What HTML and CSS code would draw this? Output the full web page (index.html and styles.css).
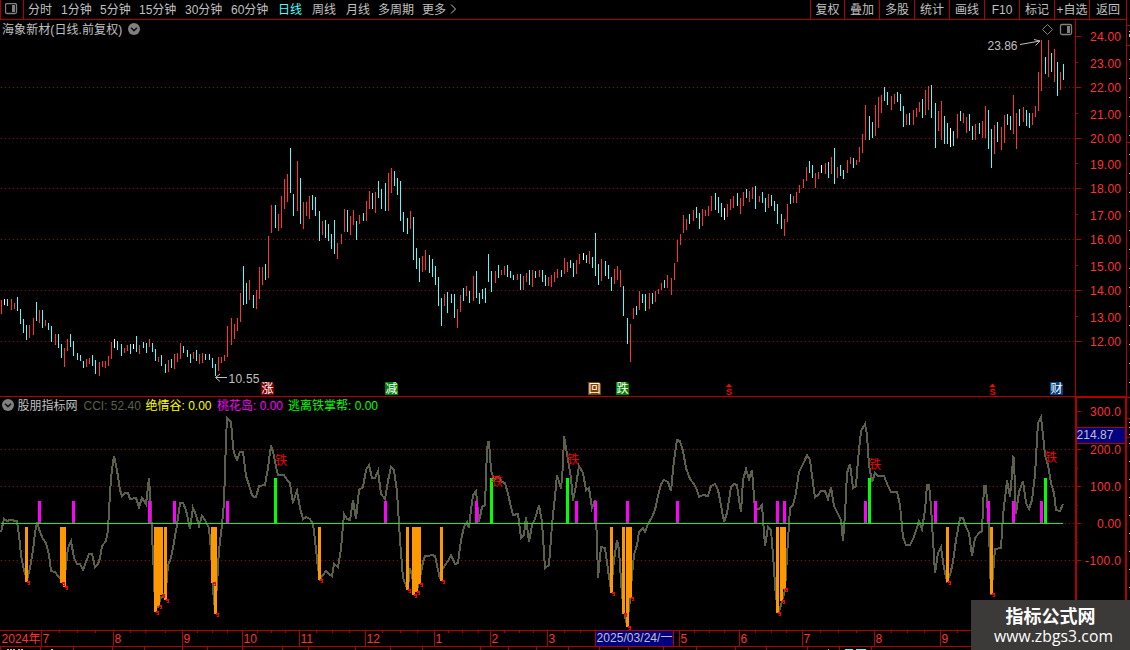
FILE: index.html
```html
<!DOCTYPE html>
<html lang="zh-CN">
<head>
<meta charset="utf-8">
<title>海象新材 日线</title>
<link rel="stylesheet" href="styles.css">
</head>
<body>
<div class="app">
  <header class="toolbar">
    <div class="layout-toggle">
      <svg width="13" height="12" viewBox="0 0 13 12"><rect x=".5" y=".5" width="11" height="10" rx="1.5" class="icon-line"/><rect x="7" y="2" width="3" height="7" class="icon-fill"/></svg>
    </div>
    <nav class="periods">
      <span>分时</span><span>1分钟</span><span>5分钟</span><span>15分钟</span><span>30分钟</span><span>60分钟</span><span class="active">日线</span><span>周线</span><span>月线</span><span>多周期</span><span>更多</span>
      <svg width="8" height="12" viewBox="0 0 8 12"><path d="M1 1.5 5.5 6 1 10.5" class="chevron"/></svg>
    </nav>
    <nav class="tools">
      <span>复权</span><span>叠加</span><span>多股</span><span>统计</span><span>画线</span><span>F10</span><span>标记</span><span>+自选</span><span>返回</span>
    </nav>
  </header>

  <section class="pane price">
    <svg id="price" class="plot" width="1130" height="376" viewBox="0 20 1130 376"></svg>
    <div class="caption">
      <span>海象新材(日线.前复权)</span>
      <svg class="drop" width="12" height="12" viewBox="0 0 12 12"><circle cx="6" cy="6" r="6"/><path d="M3 4.7 6 7.6 9 4.7"/></svg>
    </div>
    <span class="badge rise">涨</span>
    <span class="badge cut">减</span>
    <span class="badge buyback">回</span>
    <span class="badge fall">跌</span>
    <span class="badge finance">财</span>
  </section>

  <section class="pane indicator">
    <svg id="cci" class="plot" width="1130" height="234" viewBox="0 396 1130 234"></svg>
    <div class="legend">
      <svg class="drop" width="12" height="12" viewBox="0 0 12 12"><circle cx="6" cy="6" r="6"/><path d="M3 4.7 6 7.6 9 4.7"/></svg>
      <span class="name">股朋指标网</span>
      <span class="cci">CCI: 52.40</span>
      <span class="yellow">绝情谷: 0.00</span>
      <span class="magenta">桃花岛: 0.00</span>
      <span class="green">逃离铁掌帮: 0.00</span>
    </div>
  </section>

  <footer class="timeline">
    <svg id="time" class="plot" width="1130" height="20" viewBox="0 630 1130 20"></svg>
  </footer>

  <aside class="watermark">
    <strong>指标公式网</strong>
    <span>www.zbgs3.com</span>
  </aside>
</div>
<script src="chart.js"></script>
</body>
</html>
```
FILE: styles.css
```css
* { box-sizing: border-box; }
body {
  margin: 0;
  background: #000;
  color: #c0c0c0;
  font: 12px/16px "Liberation Sans", "Noto Sans CJK SC", sans-serif;
}
.app { position: relative; width: 1130px; height: 650px; overflow: hidden; display: flex; flex-direction: column; }
.toolbar { width: 1127px; height: 20px; flex: none; display: flex; border-bottom: 1px solid #b00000; border-right: 1px solid #b00000; white-space: nowrap; }
.layout-toggle { width: 24px; padding: 3px 0 0 4px; border-left: 1px solid #b00000; border-right: 1px solid #b00000; }
.layout-toggle svg { display: block; }
.periods { display: grid; grid-template-columns: 33px 39px 39px 46px 46px 47px 34px 34px 32px 44px 28px 12px; padding-left: 4px; line-height: 20px; }
.periods svg { margin-top: 3px; }
.periods .active { color: #54fcfc; }
.tools { margin-left: auto; display: grid; grid-template-columns: 34px repeat(7, 35px) 37px; line-height: 20px; }
.tools span { border-left: 1px solid #b00000; text-align: center; height: 19px; }
.icon-line { fill: none; stroke: #808080; stroke-width: 1.3; }
.icon-fill { fill: #808080; }
.chevron { fill: none; stroke: #c0c0c0; }

.pane { position: relative; flex: none; }
.plot { display: block; }
.price { height: 376px; }
.indicator { height: 234px; }
.timeline { height: 20px; flex: none; }
.caption { position: absolute; left: 2px; top: 2px; display: flex; align-items: center; gap: 6px; letter-spacing: .08px; white-space: nowrap; }
.caption .drop { margin-top: -2px; }
.legend { position: absolute; left: 2px; top: 2px; display: flex; align-items: center; white-space: nowrap; }
.legend .drop { margin-top: -2px; }
.legend .name { width: 66px; margin-left: 3.5px; }
.legend .cci { width: 62px; color: #5a6049; }
.legend .yellow { width: 71.5px; color: #ff0; }
.legend .magenta { width: 71px; color: #f0f; }
.legend .green { color: #0f0; }
.drop circle { fill: #808080; }
.drop path { fill: none; stroke: #111; stroke-width: 1.5; }

.badge {
  position: absolute; top: 362px; width: 13px; height: 13px;
  font-size: 12px; line-height: 14px; text-align: center; color: #fff;
  clip-path: polygon(0 0, 11px 0, 13px 2px, 13px 13px, 0 13px);
}
.rise { left: 261px; background: #800000; }
.cut { left: 385px; background: #008000; }
.buyback { left: 588px; background: #804000; }
.fall { left: 616px; background: #008000; }
.finance { left: 1050px; background: #004080; }

.frame { fill: #b00000; }
.grid { stroke: #a00000; stroke-width: 1; stroke-dasharray: 1 3; }
.up { fill: #ff3232; }
.down { fill: #54fcfc; }
.flat { fill: #fff; }
.axis-text { fill: #ff3232; font-size: 12px; }
.note { fill: #c0c0c0; font-size: 12px; }
.note-line { fill: none; stroke: #c0c0c0; }
.tool-line { fill: none; stroke: #808080; }
.curve { fill: none; stroke: #5a6049; stroke-width: 2; shape-rendering: crispEdges; }
.zero { fill: #0f0; }
.m { fill: #f0f; }
.g { fill: #0f0; }
.o { fill: #ff9800; }
.alert { fill: #f00; font-size: 12px; }
.cap { fill: #f00; }
.small { font-size: 9px; font-weight: 700; }
.cursor { fill: #000080; }
.side { fill: #c0c0c0; }
.peek { fill: #54fcfc; }

.watermark {
  position: absolute; left: 971px; top: 600px; width: 159px; height: 50px;
  background: #3c3939; color: #fff; text-align: center;
  display: flex; flex-direction: column; align-items: center; gap: 2px; padding-top: 5px;
}
.watermark strong { font: 700 18px/20px "Noto Sans CJK SC", sans-serif; }
.watermark span { font: 15.7px/18px "Open Sans", sans-serif; letter-spacing: .08px; margin-left: 6px; }
```
FILE: chart.js
```js
// Candles: x, high, low, direction (r up, c down, w unchanged)
const candles = `1,300,314,r 4,299,305,w 7,299,306,c 11,299,310,r 14,303,309,r 17,297,311,c 20,309,324,c 23,319,333,c 26,325,340,c 29,325,338,r 33,318,335,r 36,302,321,c 39,310,323,r 42,310,328,c 45,320,326,r 48,323,330,c 51,326,342,c 55,334,345,r 58,334,348,c 61,344,358,c 64,348,367,r 67,339,351,r 70,334,347,c 73,341,356,c 77,353,360,c 80,355,361,c 83,361,368,c 86,359,367,r 89,358,364,r 92,355,366,c 95,360,374,c 99,362,376,r 102,361,367,r 105,361,368,r 108,356,366,r 111,342,359,r 114,339,348,w 117,341,350,c 121,344,356,c 124,348,353,r 127,345,351,r 130,344,354,c 133,344,349,w 136,336,352,c 139,345,354,r 143,342,348,c 146,343,353,c 149,339,347,r 152,343,352,c 155,349,361,c 158,357,362,r 161,355,366,c 165,364,373,c 168,360,372,r 171,359,368,c 174,354,369,r 177,353,362,r 180,343,359,r 183,346,353,c 187,350,357,c 190,354,363,c 193,352,359,r 196,350,361,c 199,354,364,r 202,353,363,r 205,354,360,c 209,354,360,c 212,358,368,c 215,364,376,c 218,357,371,r 221,357,363,r 224,355,361,r 227,326,357,r 231,318,345,r 234,324,339,r 237,318,331,r 240,293,322,r 243,266,305,c 246,283,304,c 249,280,300,r 253,295,308,c 256,290,309,r 259,267,299,r 262,267,285,r 265,264,280,c 268,236,278,r 271,205,233,r 275,205,228,c 278,214,231,r 281,196,228,r 284,179,209,r 287,174,202,r 290,148,193,c 293,194,216,c 297,161,211,r 300,178,224,c 303,202,229,r 306,202,216,r 309,196,219,r 312,195,210,c 315,197,216,c 319,211,241,c 322,221,235,r 325,220,238,c 328,224,241,c 331,234,249,c 334,220,254,c 337,243,259,r 341,234,244,r 344,209,232,r 347,210,232,c 350,216,235,r 353,210,225,r 356,221,240,c 359,215,224,r 363,213,221,c 366,201,221,r 369,191,209,r 372,193,209,c 375,192,213,r 378,181,198,c 381,189,209,c 385,183,211,c 388,173,211,r 391,168,193,r 394,171,186,c 397,178,195,c 400,181,221,c 403,212,232,c 407,218,234,c 410,211,229,r 413,217,260,c 416,248,269,c 419,258,282,c 422,256,272,r 425,250,270,r 429,255,273,c 432,259,277,c 435,266,285,c 438,277,306,c 441,298,326,c 444,294,306,r 447,292,313,c 451,294,303,c 454,294,318,c 457,309,328,r 460,295,312,r 463,288,301,c 466,286,296,r 469,291,303,c 473,276,301,r 476,271,298,c 479,293,304,c 482,289,299,c 485,288,303,c 488,254,282,c 491,271,292,c 495,271,283,r 498,265,278,c 501,270,275,r 504,266,275,r 507,265,277,c 510,271,278,c 513,275,280,c 517,274,280,r 520,274,290,c 523,276,290,r 526,273,282,r 529,270,285,c 532,270,287,r 535,271,278,c 539,270,277,r 542,270,282,c 545,275,286,c 548,277,286,r 551,275,287,r 554,272,282,r 557,269,278,r 561,270,277,c 564,258,274,r 567,262,272,r 570,260,268,c 573,263,277,c 576,260,274,r 579,254,264,r 583,253,260,w 586,255,263,c 589,251,264,r 592,257,268,c 595,233,276,c 598,264,285,c 601,259,281,r 605,261,276,c 608,265,279,c 611,277,291,c 614,269,284,r 617,266,280,r 620,270,287,r 623,286,316,c 627,318,344,c 630,324,362,r 633,308,319,r 636,306,315,c 639,291,310,r 642,294,303,c 645,294,311,c 649,293,309,r 652,293,304,c 655,291,302,r 658,289,294,r 661,283,290,r 664,280,288,c 667,275,288,r 671,278,295,r 674,263,280,r 677,240,262,r 680,234,245,r 683,215,233,r 686,219,230,r 689,214,224,c 693,210,221,r 696,207,218,c 699,213,229,c 702,209,226,r 705,210,216,r 708,206,216,r 711,196,211,r 715,193,210,c 718,197,213,c 721,203,217,c 724,208,220,w 727,204,217,r 730,199,210,r 733,196,208,r 737,193,206,c 740,198,214,r 743,192,206,r 746,189,198,c 749,191,202,r 752,187,199,r 755,186,209,c 759,196,202,r 762,192,203,c 765,198,212,c 768,194,208,r 771,195,206,c 774,201,211,c 777,204,224,c 781,214,229,c 784,219,236,r 787,204,222,r 790,194,204,c 793,196,203,r 796,192,203,r 799,185,193,r 803,179,188,r 806,167,181,r 809,161,173,c 812,165,178,c 815,173,188,r 818,172,179,r 821,165,173,w 825,163,174,r 828,162,178,c 831,157,174,r 834,148,184,c 837,167,178,r 840,165,176,c 843,170,179,c 847,160,173,r 850,157,164,r 853,158,168,c 856,160,165,r 859,147,162,r 862,134,153,r 865,105,140,r 869,116,140,c 872,122,138,c 875,105,136,r 878,97,128,r 881,95,113,r 884,87,101,c 887,92,105,c 891,96,110,r 894,94,104,r 897,92,102,c 900,94,111,c 903,106,127,c 906,114,125,r 909,113,125,c 913,110,125,r 916,108,117,r 919,102,112,r 922,99,118,c 925,90,115,r 928,86,110,r 931,85,118,c 935,103,148,c 938,111,131,r 941,101,140,r 944,116,144,c 947,123,144,c 950,128,147,w 953,131,146,c 957,114,138,r 960,111,121,c 963,113,123,r 966,117,133,r 969,114,131,c 972,126,140,c 975,124,140,r 979,123,134,c 982,121,138,r 985,106,138,r 988,110,149,c 991,129,168,c 994,125,154,r 997,122,142,c 1001,127,150,r 1004,115,143,r 1007,114,125,c 1010,116,130,c 1013,95,134,r 1016,113,149,r 1019,109,126,c 1023,107,122,r 1026,110,126,c 1029,113,128,c 1032,113,125,r 1035,106,117,r 1038,72,111,r 1041,40,91,r 1045,57,74,c 1048,40,77,r 1051,53,72,c 1054,49,82,r 1057,62,96,c 1060,72,90,r 1063,64,80,c`;

const cciLine = `1,532 4,519 7,521 10,520 17,521 19,535 21,555 24,570 27,580 30,568 33,550 35,533 37,522 40,532 43,539 46,543 49,555 51,571 55,572 58,576 61,579 64,584 66,565 68,548 71,541 74,558 77,564 80,564 83,570 86,562 89,554 92,554 95,567 98,564 100,558 102,546 106,541 108,530 109,510 111,478 113,462 114,456 117,470 120,490 122,496 125,493 128,493 130,499 136,498 139,507 142,498 146,504 149,478 151,508 152,535 154,575 155,608 158,607 161,597 163,597 166,590 168,565 171,558 174,542 177,525 180,503 183,503 186,510 190,529 193,508 196,515 199,526 202,516 205,520 209,528 211,550 213,590 215,610 217,585 219,550 222,525 224,502 226,440 227,418 231,422 233,446 234,453 237,460 240,452 243,452 246,476 249,485 252,495 254,497 256,497 259,486 265,485 268,468 271,445 274,456 276,467 278,475 284,475 287,480 290,483 292,498 293,502 297,491 300,508 303,519 306,517 310,519 313,524 315,540 318,568 320,579 323,575 326,571 329,574 332,576 334,564 338,567 341,549 344,514 347,519 350,520 353,500 356,519 359,490 363,487 366,470 369,465 372,478 375,478 378,471 381,494 385,499 388,481 391,467 394,470 397,492 400,540 403,578 407,588 409,580 410,568 412,575 414,592 417,590 420,578 423,562 425,556 428,556 432,555 435,556 438,570 440,579 442,570 445,565 448,561 451,555 455,564 458,563 461,540 464,527 467,522 469,528 471,510 473,495 476,491 479,522 482,507 485,505 487,450 488,442 489,442 491,470 494,480 497,477 500,478 502,482 505,483 508,494 511,507 513,515 518,514 521,538 524,535 526,517 529,542 532,525 535,519 539,505 542,522 545,568 549,565 552,525 555,496 557,475 561,489 563,465 564,436 566,448 568,460 571,478 573,501 576,485 579,466 583,473 586,490 589,488 592,508 595,500 597,540 598,578 601,547 605,548 608,570 611,590 614,560 617,540 619,550 622,595 625,617 627,625 630,600 632,575 634,555 637,545 639,532 643,528 645,532 648,524 652,517 655,510 658,496 661,484 664,480 668,482 671,491 674,460 677,440 680,441 683,451 686,468 690,479 694,484 697,490 699,497 703,495 708,496 711,486 715,484 718,490 721,505 724,522 727,513 731,487 734,484 737,485 739,500 741,512 743,480 746,469 749,479 752,470 755,509 759,509 762,505 765,546 768,527 771,530 773,555 776,598 779,612 782,601 785,590 788,540 790,508 793,505 796,493 799,472 804,462 807,455 810,460 813,483 815,497 818,495 821,491 825,491 828,499 831,487 834,506 838,514 841,520 843,541 845,515 847,473 850,464 853,488 856,486 858,460 861,431 865,424 867,435 869,465 872,482 875,473 878,476 884,476 888,486 891,492 897,492 900,505 903,537 906,545 910,545 914,537 919,521 922,529 925,510 927,485 929,485 931,506 933,540 935,573 938,553 941,547 944,568 947,581 950,575 953,562 956,540 960,518 963,518 966,527 969,533 972,556 975,538 979,533 982,531 984,486 986,486 989,530 991,595 993,575 995,549 1001,548 1003,515 1006,490 1007,480 1010,497 1012,475 1013,457 1014,458 1015,490 1016,514 1019,492 1023,481 1026,503 1029,509 1032,500 1035,475 1037,440 1038,423 1041,417 1043,435 1045,455 1048,465 1051,483 1054,493 1056,510 1060,511 1063,504`;

const magenta = [38,72,148,173,226,384,475,575,594,626,676,754,776,783,864,934,987,1012,1040];
const green = [274,490,566,868,1044];
const orange = [[25,582],[60,583],[63,587],[154,612],[157,606],[160,595],[164,600],[211,583],[214,614],[318,580],[406,590],[412,595],[415,592],[418,584],[440,581],[610,593],[622,614],[626,627],[629,598],[776,613],[780,601],[783,589],[946,582],[990,594]];

const rect = (c, x, y, w, h) => `<rect class="${c}" x="${x}" y="${y}" width="${w}" height="${h}" shape-rendering="crispEdges"/>`;
const text = (c, x, y, s, len) => `<text class="${c}" x="${x}" y="${y}"${len ? ` textLength="${len}"` : ''}>${s}</text>`;
const dots = (y, x1, x2) => `<line class="grid" x1="${x1}" x2="${x2}" y1="${y + .5}" y2="${y + .5}" shape-rendering="crispEdges"/>`;

// Price pane
let p = '';
[87,138,188,239,290,341].forEach(y => p += dots(y, 1, 1075));
const kind = { r: 'up', c: 'down', w: 'flat' };
candles.split(' ').forEach(k => {
  const [x, a, b, d] = k.split(',');
  p += rect(kind[d], x, a, 1, b - a);
});
p += rect('frame', 1075, 20, 1, 376) + rect('frame', 1126, 20, 1, 376);
const priceRows = [[24,36,41],[23,62,68],[22,87,92],[21,113,119],[20,138,143],[19,163,169],[18,188,193],[17,214,220],[16,239,244],[15,265,271],[14,290,295],[13,316,322],[12,341,346]];
priceRows.forEach(([v, y, base]) => {
  p += rect('frame', 1076, y, v % 2 ? 2 : 5, 1) + text('axis-text', 1090, base, v + '.00', 31);
});
[25,45,142].forEach(y => p += rect('frame', 1127, y, 3, 1));
for (let y = 59; y < 396; y += 19) p += rect('side', 1129, y, 1, 1);
p += rect('side', 1129, 31, 1, 1) + rect('side', 1129, 34, 1, 3);
p += text('note', 987.5, 50, '23.86', 30) + '<path class="note-line" d="M1020 44.5 1040 41M1034 39.5 1040 41 1035.500 45.500"/>';
p += text('note', 228.5, 383, '10.55', 31) + '<path class="note-line" d="M227 377.500H216M220 374 215.500 377.500 220 381.500"/>';
p += '<path class="tool-line" d="M1047.500 24.500 1052.500 29.500 1047.500 34.500 1042.500 29.500Z"/><rect class="icon-line" x="1060.500" y="24.500" width="11" height="10" rx="1.500"/>' + rect('icon-fill', 1067, 26, 3, 7);
[729, 992.5].forEach(x => p += `<path class="cap" d="M${x - 3} 387 ${x} 383.500 ${x + 3} 387Z"/><text class="alert small" x="${x}" y="394.500" text-anchor="middle">S</text>`);
document.getElementById('price').innerHTML = p;

// Indicator pane
let q = rect('frame', 0, 396, 1127, 1);
[449,486,560].forEach(y => q += dots(y, 1, 1075));
q += dots(523, 1065, 1075);
q += `<polyline class="curve" points="${cciLine}"/>`;
orange.forEach(([x, b]) => q += rect('o', x, 527, 3, b - 527));
magenta.forEach(x => q += rect('m', x, 501, 3, 22));
green.forEach(x => q += rect('g', x, 478, 3, 45));
q += rect('zero', 1, 523, 1062, 1);
orange.forEach(([x, b]) => q += `<path fill="#f00" d="M${x + 2} ${b - 1}h3v3l-1 1h-1v-1l1-1h-2z" shape-rendering="crispEdges"/>`);
[[275,465],[491,486],[567,464],[869,469],[1045,462]].forEach(([x, y]) => q += text('alert', x, y, '铁'));
q += rect('frame', 1075, 397, 2, 233) + rect('frame', 1125, 397, 2, 233) + rect('frame', 1075, 396, 52, 2);
[[411,416,'300.0',1090,31],[449,454,'200.0',1090,31],[486,491,'100.0',1090,31],[523,528,'0.00',1097,24],[560,565,'-100.0',1085,36]].forEach(([y, b, s, x, l]) => q += rect('frame', 1077, y, 4, 1) + text('axis-text', x, b, s, l));
[468,505,542].forEach(y => q += rect('frame', 1077, y, 1, 1));
q += rect('cursor', 1077, 428, 48, 15) + rect('frame', 1077, 427, 48, 1) + rect('frame', 1077, 443, 48, 1) + text('note', 1076.5, 439, '214.87', 37);
[397,418,437].forEach(y => q += rect('frame', 1127, y, 3, 1));
[422,427,434,443,461,479,497,515,533,551,569,587].forEach(y => q += rect('side', 1129, y, 1, 1));
document.getElementById('cci').innerHTML = q;

// Time axis
let t = rect('frame', 0, 630, 1127, 1) + rect('frame', 0, 646, 1127, 1);
const months = [[41,'7'],[113,'8'],[182,'9'],[242,'10'],[299,'11'],[365,'12'],[434,'1'],[490,'2'],[547,'3'],[679,'5'],[739,'6'],[802,'7'],[874,'8'],[940,'9']];
months.forEach(([x, s]) => t += rect('frame', x, 630, 1, 16) + text('axis-text', x + 1.5, 643, s));
t += text('axis-text', 1.5, 643, '2024年', 39);
[59,77,95,130,145,165,197,212,227,257,271,285,316,332,349,382,400,417,448,462,478,504,519,533,564,580,694,709,724,755,771,786,820,838,856,891,907,924,957].forEach(x => t += rect('frame', x, 631, 1, 2));
[0,40,73,112,144,182,207,242,282,308,355,390,422,480,508,536,568,599,628,663,696,735,766,807,839,871].forEach(x => t += rect('frame', x, 647, 1, 3));
t += rect('cursor', 596, 631, 77, 15) + rect('frame', 595, 630, 1, 16) + rect('frame', 673, 630, 1, 16) + text('note', 596.5, 642, '2025/03/24/一', 76);
[7,10,13,18,21,51].forEach(x => t += rect('side', x, 649, 2, 1));
t += rect('peek', 845, 649, 8, 1) + rect('peek', 856, 649, 10, 1) + rect('side', 828, 649, 1, 1);
document.getElementById('time').innerHTML = t;
```
